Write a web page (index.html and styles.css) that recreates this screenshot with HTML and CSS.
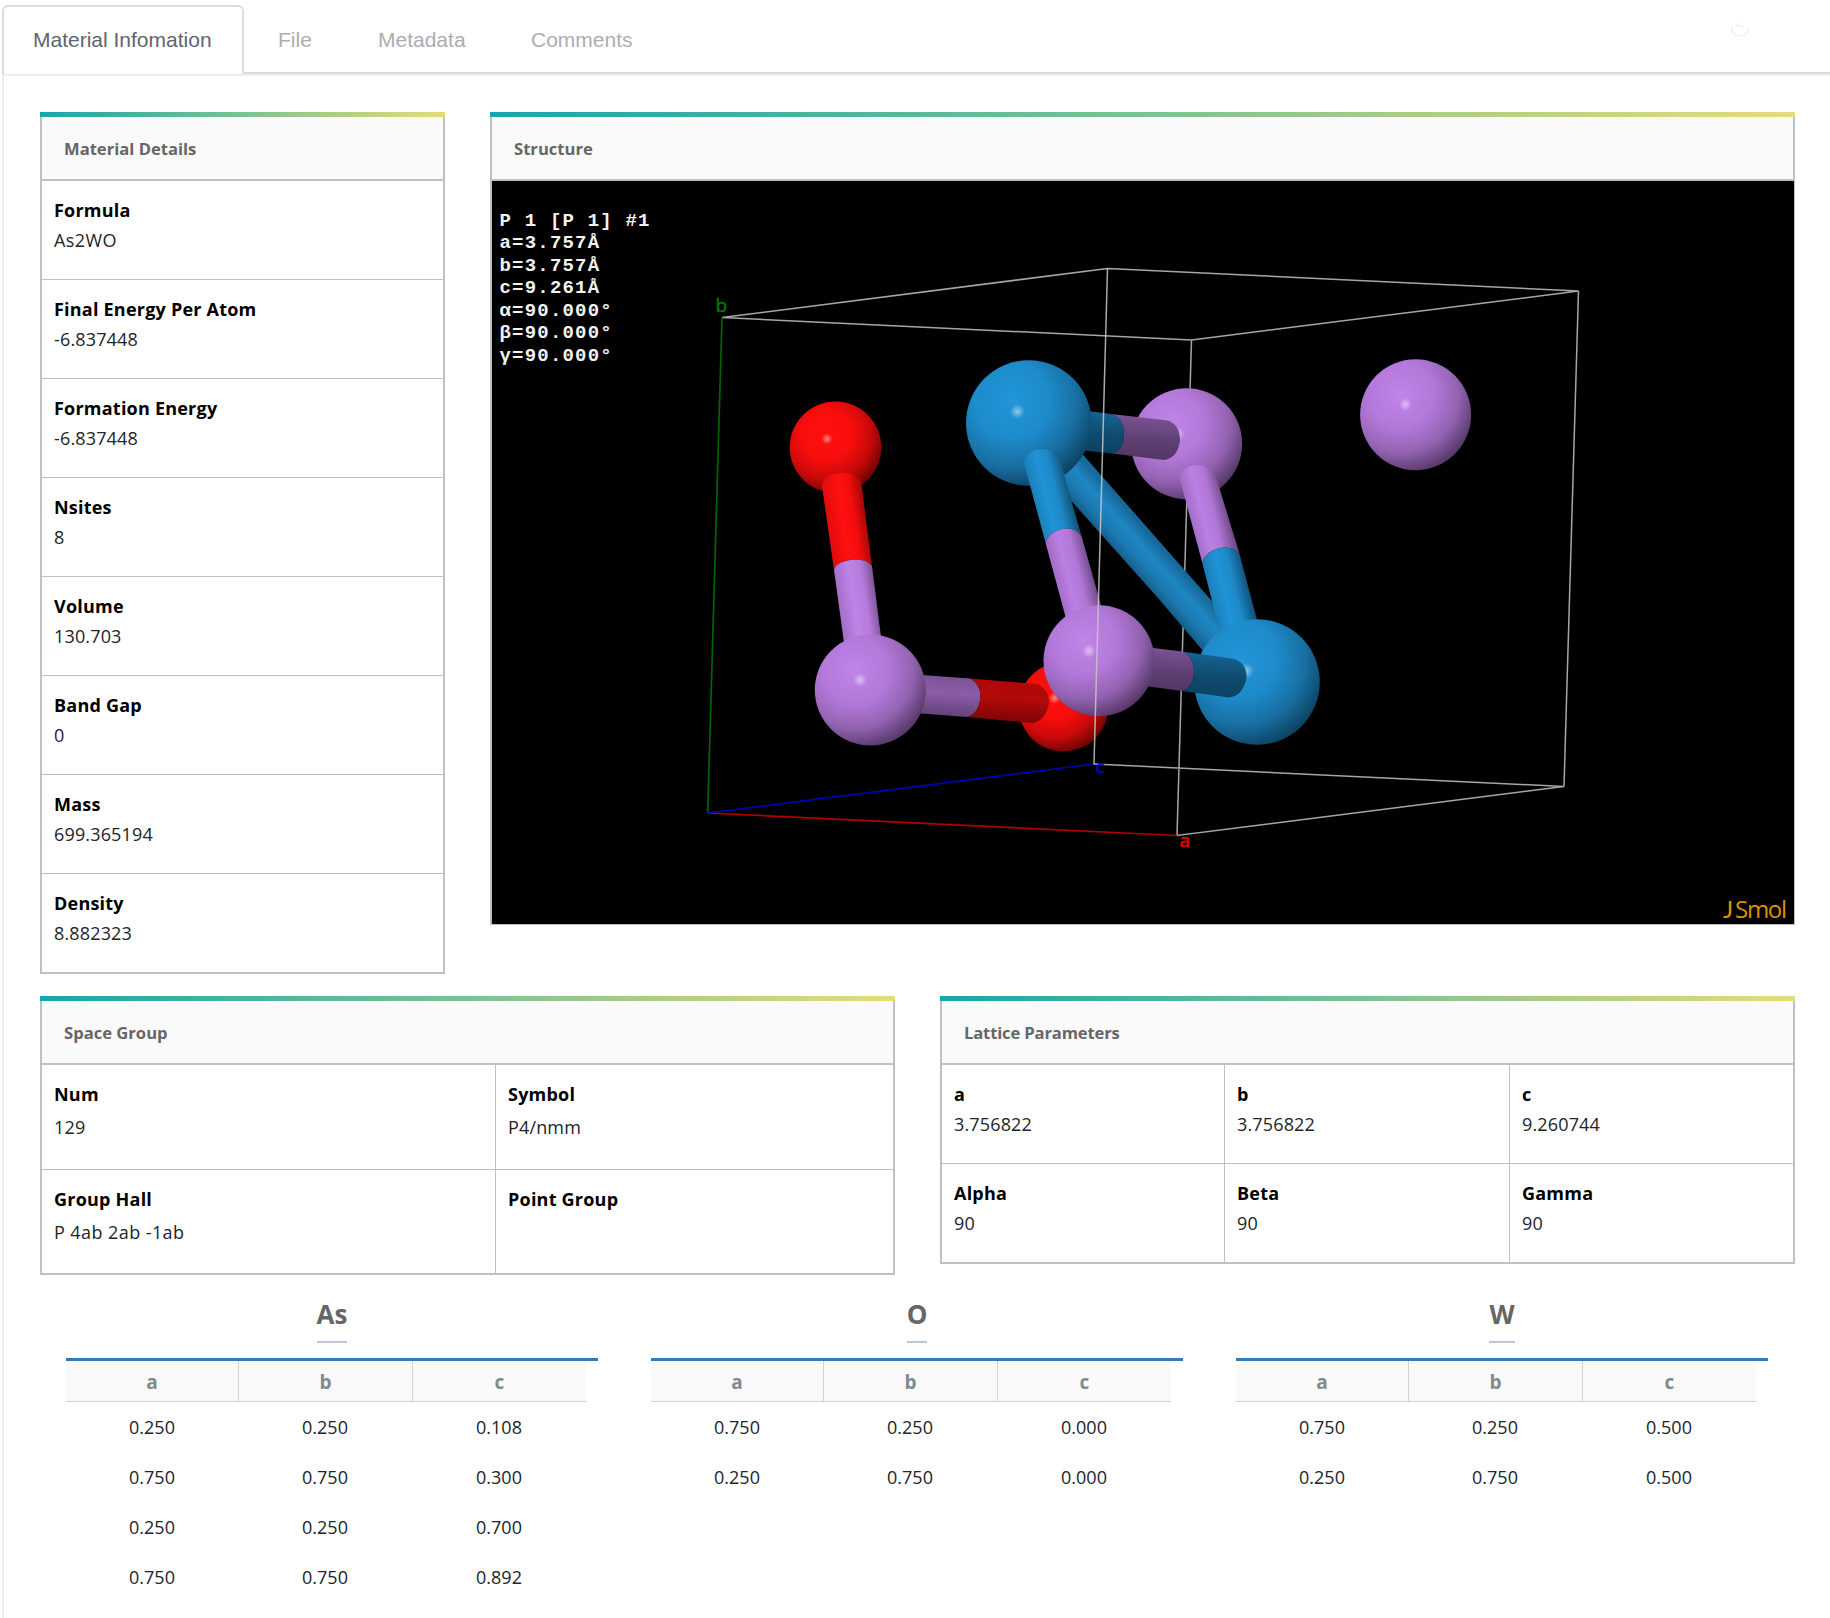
FILE: index.html
```html
<!DOCTYPE html>
<html lang="en">
<head>
<meta charset="utf-8">
<title>Material Information</title>
<link rel="stylesheet" href="styles.css">
</head>
<body>
<nav class="tabs">
  <a class="tab active"><span>Material Infomation</span></a>
  <a class="tab tab-file">File</a>
  <a class="tab tab-meta">Metadata</a>
  <a class="tab tab-comments">Comments</a>
  <svg class="refresh" viewBox="0 0 20 18"><path d="M2.500 5.500A7.800 6.500 0 0 0 6 14.500H14A7.800 6.500 0 0 0 17.500 5.500M5.500 6L9 3V5.500H14" fill="none" stroke="#f3f3f3" stroke-width="1.5"/></svg>
</nav>
<main class="content">
  <div class="row top-row">
    <section class="card details">
      <h2 class="card-title">Material Details</h2>
      <div class="cells">
        <div class="cell"><b>Formula</b><span class="wordy">As2WO</span></div>
        <div class="cell"><b>Final Energy Per Atom</b><span>-6.837448</span></div>
        <div class="cell"><b>Formation Energy</b><span>-6.837448</span></div>
        <div class="cell"><b>Nsites</b><span>8</span></div>
        <div class="cell"><b>Volume</b><span>130.703</span></div>
        <div class="cell"><b>Band Gap</b><span>0</span></div>
        <div class="cell"><b>Mass</b><span>699.365194</span></div>
        <div class="cell"><b>Density</b><span>8.882323</span></div>
      </div>
    </section>
    <section class="card structure">
      <h2 class="card-title">Structure</h2>
      <svg class="viewer" viewBox="492 181 1302 743" width="1302" height="743">
        <defs>
          <radialGradient id="gRed" cx=".4" cy=".36" r=".7"><stop offset="0" stop-color="#ff1010"/><stop offset=".4" stop-color="#f80d0d"/><stop offset=".7" stop-color="#c70909"/><stop offset="1" stop-color="#5c0303"/></radialGradient>
          <radialGradient id="gBlue" cx=".36" cy=".32" r=".75"><stop offset="0" stop-color="#2196da"/><stop offset=".4" stop-color="#1e8bca"/><stop offset=".7" stop-color="#186fa2"/><stop offset="1" stop-color="#0b3c5a"/></radialGradient>
          <radialGradient id="gPurple" cx=".36" cy=".32" r=".75"><stop offset="0" stop-color="#c184e9"/><stop offset=".4" stop-color="#b378da"/><stop offset=".7" stop-color="#9263b1"/><stop offset="1" stop-color="#4d325d"/></radialGradient>
          <radialGradient id="gShine"><stop offset="0" stop-color="#fff" stop-opacity=".5"/><stop offset=".5" stop-color="#fff" stop-opacity=".25"/><stop offset="1" stop-color="#fff" stop-opacity="0"/></radialGradient>
          <linearGradient id="bRed" gradientUnits="userSpaceOnUse" x1="828" y1="530" x2="867" y2="524"><stop offset="0" stop-color="#e00b0b"/><stop offset=".4" stop-color="#ff1010"/><stop offset=".7" stop-color="#f40d0d"/><stop offset="1" stop-color="#a80707"/></linearGradient>
          <linearGradient id="bPurA" gradientUnits="userSpaceOnUse" x1="839" y1="605" x2="877" y2="599"><stop offset="0" stop-color="#a56fca"/><stop offset=".4" stop-color="#c083e8"/><stop offset=".7" stop-color="#b67bdd"/><stop offset="1" stop-color="#7d5497"/></linearGradient>
          <linearGradient id="bBluB" gradientUnits="userSpaceOnUse" x1="1034" y1="503" x2="1071" y2="494"><stop offset="0" stop-color="#1b7eb8"/><stop offset=".35" stop-color="#2094d8"/><stop offset=".65" stop-color="#1d88c7"/><stop offset="1" stop-color="#115075"/></linearGradient>
          <linearGradient id="bPurB" gradientUnits="userSpaceOnUse" x1="1055" y1="580" x2="1092" y2="571"><stop offset="0" stop-color="#a36cc7"/><stop offset=".35" stop-color="#bc7fe4"/><stop offset=".65" stop-color="#b176d6"/><stop offset="1" stop-color="#724c8a"/></linearGradient>
          <linearGradient id="bPurC" gradientUnits="userSpaceOnUse" x1="1190" y1="520" x2="1227" y2="511"><stop offset="0" stop-color="#a36cc7"/><stop offset=".35" stop-color="#bc7fe4"/><stop offset=".65" stop-color="#b176d6"/><stop offset="1" stop-color="#724c8a"/></linearGradient>
          <linearGradient id="bBluC" gradientUnits="userSpaceOnUse" x1="1212" y1="600" x2="1250" y2="591"><stop offset="0" stop-color="#1b7eb8"/><stop offset=".35" stop-color="#2094d8"/><stop offset=".65" stop-color="#1d88c7"/><stop offset="1" stop-color="#115075"/></linearGradient>
          <linearGradient id="bDiag" gradientUnits="userSpaceOnUse" x1="1129" y1="566" x2="1156" y2="542"><stop offset="0" stop-color="#155f8b"/><stop offset=".3" stop-color="#1b7ab2"/><stop offset=".65" stop-color="#1e86c2"/><stop offset="1" stop-color="#17699a"/></linearGradient>
          <linearGradient id="dBlue" x1=".1" y1="0" x2="0" y2="1"><stop offset="0" stop-color="#166494"/><stop offset=".5" stop-color="#0f4b6e"/><stop offset="1" stop-color="#0b4160"/></linearGradient>
          <linearGradient id="dPurple" x1=".1" y1="0" x2="0" y2="1"><stop offset="0" stop-color="#7b5394"/><stop offset=".5" stop-color="#5f4074"/><stop offset="1" stop-color="#513463"/></linearGradient>
          <linearGradient id="dPurpleL" x1=".1" y1="0" x2="0" y2="1"><stop offset="0" stop-color="#7c5396"/><stop offset=".4" stop-color="#8b5ca8"/><stop offset="1" stop-color="#5e3f72"/></linearGradient>
          <linearGradient id="dRed" x1=".1" y1="0" x2="0" y2="1"><stop offset="0" stop-color="#ad0808"/><stop offset=".4" stop-color="#b40909"/><stop offset="1" stop-color="#740404"/></linearGradient>
        </defs>
        <rect x="492" y="181" width="1302" height="743" fill="#000"/>
        <!-- unit cell: edges behind the atoms -->
        <g fill="none" stroke="#a6a6a6" stroke-width="1.5">
          <path d="M722 317.5L1107.5 268.5L1578.5 291L1191.5 340Z"/>
          <path d="M1191.5 340L1177 835.5L1564 786.5L1094 764M1578.5 291L1564 786.5"/>
        </g>
        <path d="M707.7 813L722 317.5" stroke="#006400" stroke-width="1.7"/>
        <path d="M707.7 813L1177 835.5" stroke="#b00000" stroke-width="1.7"/>
        <path d="M707.7 813L1094 764" stroke="#0000b4" stroke-width="1.7"/>
        <!-- atoms and bonds, far to near -->
        <circle cx="1415.6" cy="414.7" r="55.5" fill="url(#gPurple)"/>
        <circle cx="1405.5" cy="404.5" r="6.5" fill="url(#gShine)"/>
        <circle cx="1186.7" cy="443.7" r="55.5" fill="url(#gPurple)"/>
        <circle cx="1178" cy="434" r="7" fill="url(#gShine)"/>
        <path d="M1080 410L1111 414Q1124 418 1124 434Q1124 450 1112 453.5L1080 450Z" fill="url(#dBlue)"/>
        <path d="M1111 414L1168 420.5Q1180 425 1180 440Q1178 458 1164 460L1112 453.5Q1124 450 1124 434Q1124 418 1111 414Z" fill="url(#dPurple)"/>
        <path d="M1070 440L1085 457L1233 625L1237 650L1204 652L1158 598L1050 477Z" fill="url(#bDiag)"/>
        <path d="M1179.5 478Q1181 467 1196 465Q1211 465 1215.5 475L1239.5 554Q1232 545 1218 548.5Q1204 553 1202.3 562.7Z" fill="url(#bPurC)"/>
        <path d="M1202.3 562.7Q1204 553 1218 548.5Q1232 545 1239.5 554L1261 635L1222 640Z" fill="url(#bBluC)"/>
        <circle cx="1257" cy="682" r="62.8" fill="url(#gBlue)"/>
        <circle cx="1246" cy="671" r="8" fill="url(#gShine)"/>
        <path d="M1145 647L1182 651.5Q1194 656 1194 672Q1193 688 1182 691L1145 686Z" fill="url(#dPurple)"/>
        <path d="M1182 651.5L1235 659Q1247 664 1246.5 678Q1243 696 1229 697.5L1182 691Q1193 688 1194 672Q1194 656 1182 651.5Z" fill="url(#dBlue)"/>
        <circle cx="1028.8" cy="423" r="62.8" fill="url(#gBlue)"/>
        <circle cx="1017.5" cy="411.5" r="7.5" fill="url(#gShine)"/>
        <path d="M1023.8 462Q1027 450 1042 449Q1055 449 1059.5 459L1081.5 536Q1074 526 1060 529.5Q1047 534 1045.6 543Z" fill="url(#bBluB)"/>
        <path d="M1045.6 543Q1047 534 1060 529.5Q1074 526 1081.5 536L1104 616L1068 626Z" fill="url(#bPurB)"/>
        <circle cx="1063.5" cy="706.7" r="44.8" fill="url(#gRed)"/>
        <circle cx="1054.5" cy="698" r="6" fill="url(#gShine)"/>
        <circle cx="1099" cy="660.8" r="55.5" fill="url(#gPurple)"/>
        <circle cx="1089" cy="651" r="7" fill="url(#gShine)"/>
        <path d="M915 674.5L970 678.5Q980.5 683 980.5 697Q979 714 967 717L915 713Z" fill="url(#dPurpleL)"/>
        <path d="M970 678.5L1037 684Q1049 689 1049 703Q1046 720 1033 723L967 717Q979 714 980.5 697Q980.5 683 970 678.5Z" fill="url(#dRed)"/>
        <circle cx="835.5" cy="447.3" r="45.8" fill="url(#gRed)"/>
        <circle cx="827" cy="438.8" r="5.5" fill="url(#gShine)"/>
        <path d="M822 486Q824 474 842 473Q857 473 861 481L872 566Q866 558 850 560Q835 563 834 570Z" fill="url(#bRed)"/>
        <path d="M834 570Q835 563 850 560Q866 558 872 566L882 645L845 650Z" fill="url(#bPurA)"/>
        <circle cx="870.3" cy="690" r="55.5" fill="url(#gPurple)"/>
        <circle cx="860" cy="680" r="7" fill="url(#gShine)"/>
        <path d="M1107.5 268.5L1094 764" stroke="#c8c8c8" stroke-opacity=".85" stroke-width="1.5"/>
        <g class="cell-info">
          <text x="499.500" y="225.500" xml:space="preserve">P 1 [P 1] #1</text>
          <text x="499.500" y="248">a=3.757Å</text>
          <text x="499.500" y="270.500">b=3.757Å</text>
          <text x="499.500" y="293">c=9.261Å</text>
          <text x="499.500" y="315.500">α=90.000°</text>
          <text x="499.500" y="338">β=90.000°</text>
          <text x="499.500" y="360.500">γ=90.000°</text>
        </g>
        <g class="axis">
          <text x="715.500" y="311.500" fill="#007800" stroke="#007800">b</text>
          <text x="1095.500" y="773" fill="#0000dc" stroke="#0000dc">c</text>
          <text x="1179.500" y="846.500" fill="#f00000" stroke="#f00000">a</text>
        </g>
        <text class="brand" y="917.500"><tspan class="brand-j" x="1723">J</tspan><tspan x="1735" textLength="52">Smol</tspan></text>
      </svg>
    </section>
  </div>
  <div class="row mid-row">
    <section class="card space">
      <h2 class="card-title">Space Group</h2>
      <div class="cells">
        <div class="cell"><b>Num</b><span>129</span></div>
        <div class="cell"><b>Symbol</b><span>P4/nmm</span></div>
        <div class="cell"><b>Group Hall</b><span class="wordy">P 4ab 2ab -1ab</span></div>
        <div class="cell"><b>Point Group</b></div>
      </div>
    </section>
    <section class="card lattice">
      <h2 class="card-title">Lattice Parameters</h2>
      <div class="cells">
        <div class="cell"><b>a</b><span>3.756822</span></div>
        <div class="cell"><b>b</b><span>3.756822</span></div>
        <div class="cell"><b>c</b><span>9.260744</span></div>
        <div class="cell"><b>Alpha</b><span>90</span></div>
        <div class="cell"><b>Beta</b><span>90</span></div>
        <div class="cell"><b>Gamma</b><span>90</span></div>
      </div>
    </section>
  </div>
  <div class="elements">
    <section class="element">
      <h3><span>As</span></h3>
      <div class="table">
        <div class="head"><b>a</b><b>b</b><b>c</b></div>
        <div class="line"><span>0.250</span><span>0.250</span><span>0.108</span></div>
        <div class="line"><span>0.750</span><span>0.750</span><span>0.300</span></div>
        <div class="line"><span>0.250</span><span>0.250</span><span>0.700</span></div>
        <div class="line"><span>0.750</span><span>0.750</span><span>0.892</span></div>
      </div>
    </section>
    <section class="element">
      <h3><span>O</span></h3>
      <div class="table">
        <div class="head"><b>a</b><b>b</b><b>c</b></div>
        <div class="line"><span>0.750</span><span>0.250</span><span>0.000</span></div>
        <div class="line"><span>0.250</span><span>0.750</span><span>0.000</span></div>
      </div>
    </section>
    <section class="element">
      <h3><span>W</span></h3>
      <div class="table">
        <div class="head"><b>a</b><b>b</b><b>c</b></div>
        <div class="line"><span>0.750</span><span>0.250</span><span>0.500</span></div>
        <div class="line"><span>0.250</span><span>0.750</span><span>0.500</span></div>
      </div>
    </section>
  </div>
</main>
</body>
</html>
```
FILE: styles.css
```css
* { box-sizing: border-box; }
html { height: 1618px; overflow: hidden; }
body {
  margin: 0;
  height: 1618px;
  overflow: hidden;
  background: #fff;
  color: #212529;
  font: 18px/30px "Segoe UI", "Open Sans", "Noto Sans", sans-serif;
}
.tabs {
  display: flex;
  height: 74px;
  padding: 5px 0 0 2px;
  font: 21px/66px "Liberation Sans", Arial, sans-serif;
  color: #abadb3;
  background: linear-gradient(#dcdcdc, #dcdcdc) 2px 72px / 100% 2px no-repeat;
}
.tab { padding-top: 2px; }
.active {
  width: 242px;
  padding: 0 0 0 29px;
  border: 2px solid #dcdcdc;
  border-bottom: 0;
  border-radius: 6px 6px 0 0;
  background: #fff;
  color: #5f6470;
}
.tab-file { width: 100px; margin-left: 34px; }
.tab-meta { width: 153px; }
.refresh { width: 20px; height: 18px; margin: 16px 80px 0 auto; }
.content {
  height: 1544px;
  margin-left: 2px;
  padding: 36px 35px 0 36px;
  border-top: 2px solid #eee;
  border-left: 2px solid #eee;
}
.row { display: flex; justify-content: space-between; align-items: flex-start; }
.card { border: 2px solid #bdc1c5; border-top: 0; }
.card::before {
  content: "";
  display: block;
  height: 5px;
  margin: 0 -2px;
  background: linear-gradient(90deg, #14a8ab, #e5dc78);
}
.card-title {
  height: 64px;
  margin: 0;
  padding-left: 22px;
  border-bottom: 2px solid #bdc1c5;
  background: #fafafa;
  color: #666;
  font-size: 16.6px;
  font-weight: 700;
  line-height: 64px;
}
.details { width: 405px; }
.structure { width: 1305px; border-right-width: 1px; border-bottom-width: 1px; }
.structure .card-title { border-right: 1px solid #bdc1c5; }
.structure::before { margin-right: -1px; }
.viewer { display: block; width: 1302px; height: 743px; }
.mid-row { height: 279px; margin-top: 22px; }
.lattice .card-title { letter-spacing: -.15px; }
.space, .lattice { width: 855px; }
.cell {
  display: flex;
  flex-direction: column;
  height: 99px;
  padding: 14px 12px 0;
  border-bottom: 1px solid #bdc1c5;
}
.cell b { color: #000; font-weight: 700; letter-spacing: .22px; }
.cell span { letter-spacing: .15px; }
.cell .wordy { letter-spacing: .42px; }
.details .cell:last-child { height: 98px; border-bottom: 0; }
.space .cells { display: grid; grid-template-columns: 454px 1fr; grid-template-rows: 105px 103px; }
.space .cell { height: auto; }
.space .cell span { line-height: 36px; }
.space .cell:nth-child(odd) { border-right: 1px solid #bdc1c5; }
.space .cell:nth-child(n+3) { border-bottom: 0; }
.lattice .cells { display: grid; grid-template-columns: 283px 285px 1fr; grid-template-rows: 99px 98px; }
.lattice .cell { height: auto; border-right: 1px solid #bdc1c5; }
.lattice .cell:nth-child(3n) { border-right: 0; }
.lattice .cell:nth-child(n+4) { border-bottom: 0; }
.cell-info { fill: #f2f2f2; font: bold 19px "Courier New", "Liberation Mono", monospace; letter-spacing: 1.2px; }
.axis { font: 19px "Open Sans", sans-serif; stroke-width: .5px; }
.brand { fill: #dc9200; font: 24px "Open Sans", sans-serif; }
.brand-j { font-family: Lato, sans-serif; }
.elements { display: flex; gap: 53px; margin: 20px 0 0 26px; align-items: flex-start; }
.element { width: 532px; flex: none; }
.element h3 { margin: 0; height: 63px; text-align: center; color: #666; font-size: 26px; line-height: 38px; }
.element h3 span { display: inline-block; height: 48px; border-bottom: 2px solid #bcc8d8; }
.table { border-top: 3px solid #337ab7; }
.head, .line { display: grid; grid-template-columns: 172px 174px 174px; width: 520px; text-align: center; }
.head { height: 41px; background: #f9f9f9; border-bottom: 1px solid #d3d3d3; }
.head b { height: 40px; color: #7f8b8f; font-size: 19px; line-height: 42px; }
.head b + b { border-left: 1px solid #d3d3d3; }
.line { height: 50px; line-height: 51px; }
```
